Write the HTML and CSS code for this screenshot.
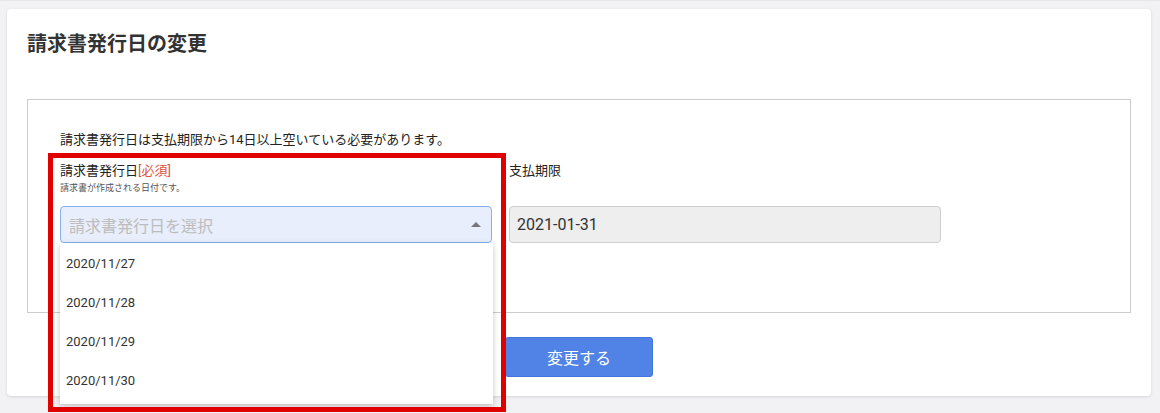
FILE: index.html
```html
<!DOCTYPE html>
<html lang="ja">
<head>
<meta charset="utf-8">
<title>請求書発行日の変更</title>
<link rel="stylesheet" href="styles.css">
</head>
<body>
<div class="page">
  <div class="card">
    <h1 class="title">請求書発行日の変更</h1>
    <div class="panel">
      <p class="notice">請求書発行日は支払期限から14日以上空いている必要があります。</p>
      <div class="fields">
        <div class="field field-issue">
          <div class="field-head">
            <div class="label">請求書発行日<span class="required">[必須]</span></div>
            <div class="help">請求書が作成される日付です。</div>
          </div>
          <div class="select">
            <span class="placeholder">請求書発行日を選択</span>
            <span class="caret"></span>
            <ul class="menu">
              <li class="menu-item">2020/11/27</li>
              <li class="menu-item">2020/11/28</li>
              <li class="menu-item">2020/11/29</li>
              <li class="menu-item">2020/11/30</li>
            </ul>
          </div>
          <div class="highlight"></div>
        </div>
        <div class="field">
          <div class="field-head">
            <div class="label">支払期限</div>
          </div>
          <div class="readonly">2021-01-31</div>
        </div>
      </div>
    </div>
    <div class="actions">
      <button class="btn-primary" type="button">変更する</button>
    </div>
  </div>
</div>
</body>
</html>
```

FILE: styles.css
```css
* { box-sizing: border-box; }
html, body {
  margin: 0;
  padding: 0;
  height: 413px;
  overflow: hidden;
  background: #f2f2f4;
  font-family: "Roboto", "Noto Sans CJK JP", sans-serif;
  color: #333;
}
.page {
  padding: 9px 9px 0 7px;
  border-top: 1px solid #e6e6e8;
}
.card {
  background: #fff;
  border-radius: 4px;
  box-shadow: 0 1px 3px rgba(0,0,0,0.12);
  padding: 22px 20px 19px 20px;
  height: 387px;
  margin-top: -1px;
}
.title {
  margin: 0;
  font-size: 20px;
  line-height: 26px;
  font-weight: 700;
  color: #333;
}
.panel {
  margin-top: 42px;
  border: 1px solid #cccccc;
  height: 214px;
  padding: 30px 32px 0 32px;
}
.notice {
  margin: 0;
  font-size: 13px;
  line-height: 20px;
  color: #222;
}
.fields {
  margin-top: 11px;
  display: grid;
  grid-template-columns: 433px 432px;
  column-gap: 16px;
}
.field { position: relative; }
.field-head {
  height: 34px;
  margin-bottom: 11px;
}
.label {
  font-size: 13px;
  line-height: 20px;
  color: #222;
}
.required { color: #e0533d; }
.help {
  font-size: 9px;
  line-height: 14px;
  color: #555;
}
.select {
  position: relative;
  height: 37px;
  width: 432px;
  border: 1px solid #86b0ee;
  border-radius: 4px;
  background: #e8eefb;
  display: flex;
  align-items: center;
  padding-left: 8px;
}
.placeholder {
  font-size: 16px;
  color: #bdbdbd;
}
.caret {
  position: absolute;
  right: 10px;
  top: 15px;
  width: 0;
  height: 0;
  border-left: 5px solid transparent;
  border-right: 5px solid transparent;
  border-bottom: 5px solid #777;
}
.menu {
  position: absolute;
  left: -1px;
  top: 36px;
  width: 433px;
  height: 161px;
  margin: 0;
  padding: 1px 0 0 0;
  list-style: none;
  background: #fff;
  box-shadow: 0 2px 6px rgba(0,0,0,0.22);
  z-index: 2;
}
.menu-item {
  height: 39px;
  line-height: 39px;
  padding-left: 6px;
  font-size: 13px;
  color: #333;
}
.readonly {
  height: 37px;
  width: 432px;
  border: 1px solid #cfcfcf;
  border-radius: 4px;
  background: #eeeeee;
  display: flex;
  align-items: center;
  padding-left: 7px;
  font-size: 16px;
  color: #333;
}
.highlight {
  position: absolute;
  left: -12px;
  top: -8px;
  width: 458px;
  height: 259px;
  border: 5px solid #e00000;
  z-index: 3;
  pointer-events: none;
}
.actions {
  margin-top: 24px;
  display: flex;
  justify-content: center;
}
.btn-primary {
  width: 148px;
  height: 40px;
  background: #5183e6;
  border: 1px solid #4574d8;
  border-radius: 3px;
  color: #fff;
  font-family: "Roboto", "Noto Sans CJK JP", sans-serif;
  font-size: 16px;
}
```
